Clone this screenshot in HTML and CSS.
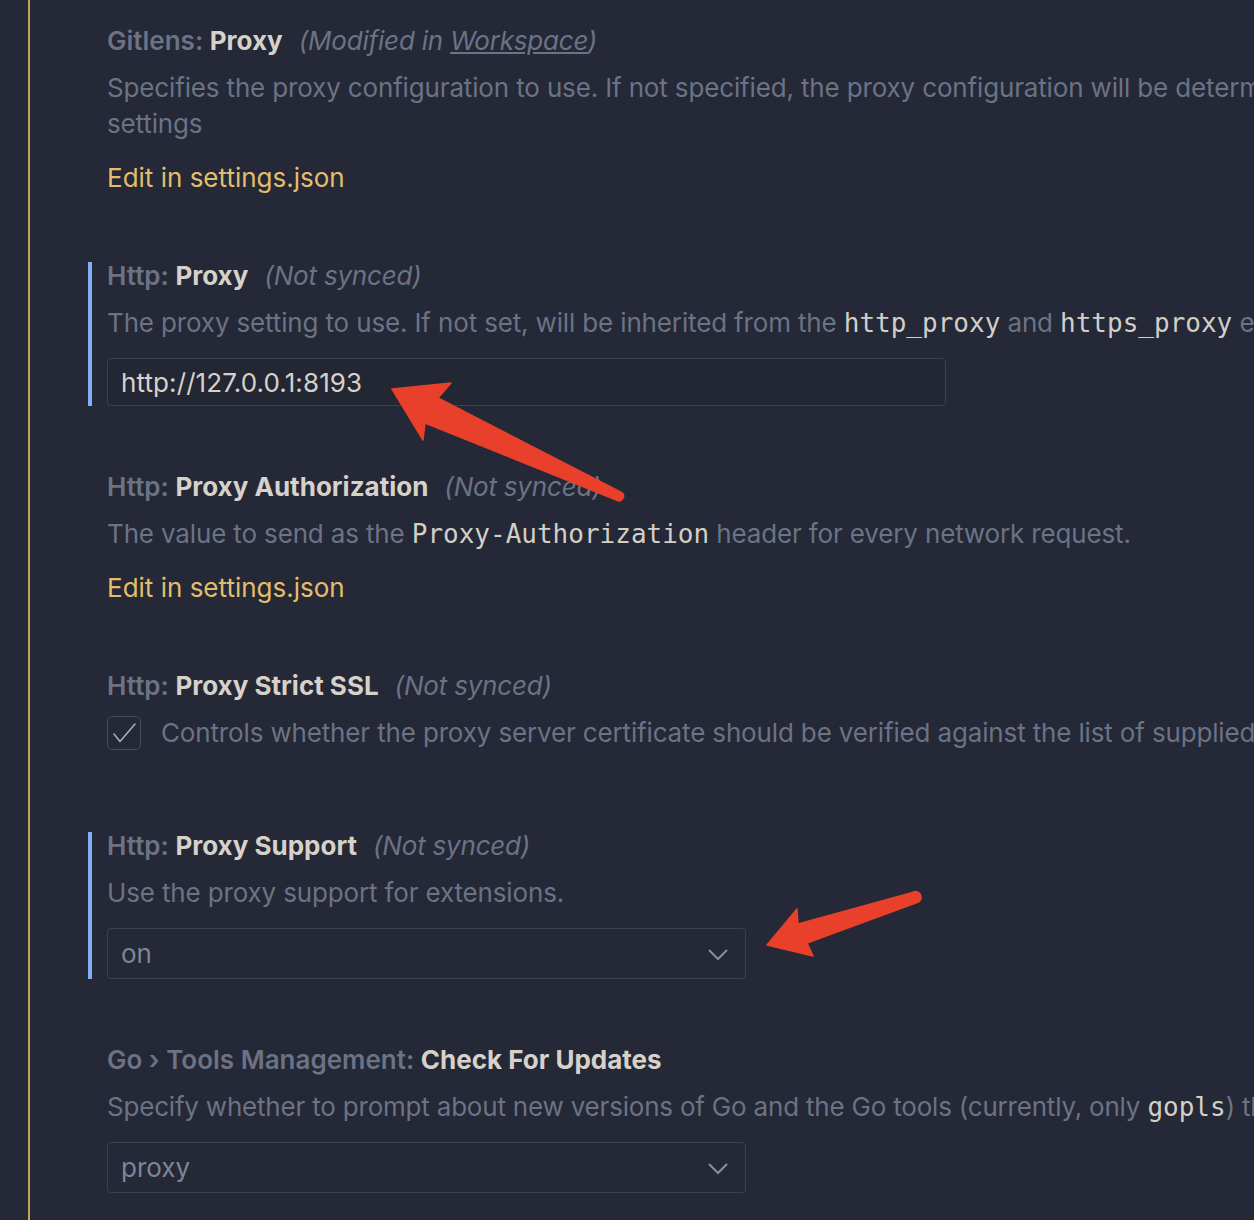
FILE: index.html
```html
<!DOCTYPE html>
<html>
<head>
<meta charset="utf-8">
<link rel="stylesheet" href="styles.css">
</head>
<body>
<div class="editor">
  <div class="list">
    <div class="item">
      <div class="title"><span class="cat">Gitlens: </span><span class="label">Proxy</span><span class="meta">(Modified in <u>Workspace</u>)</span></div>
      <div class="desc nowrap">Specifies the proxy configuration to use. If not specified, the proxy configuration will be determined from VS Code<br>settings</div>
      <div class="link">Edit in settings.json</div>
    </div>

    <div class="item focused has-input">
      <div class="title"><span class="cat">Http: </span><span class="label">Proxy</span><span class="meta">(Not synced)</span></div>
      <div class="desc nowrap">The proxy setting to use. If not set, will be inherited from the <code>http_proxy</code> and <code>https_proxy</code> environment variables.</div>
      <div class="input text-input">http://127.0.0.1:8193</div>
    </div>

    <div class="item">
      <div class="title"><span class="cat">Http: </span><span class="label">Proxy Authorization</span><span class="meta">(Not synced)</span></div>
      <div class="desc nowrap">The value to send as the <code>Proxy-Authorization</code> header for every network request.</div>
      <div class="link">Edit in settings.json</div>
    </div>

    <div class="item bool">
      <div class="title"><span class="cat">Http: </span><span class="label">Proxy Strict SSL</span><span class="meta">(Not synced)</span></div>
      <div class="check-row">
        <span class="checkbox"><svg width="34" height="34" viewBox="0 0 34 34"><polyline points="7,18 13,25.5 28,8" fill="none" stroke="#a9adb6" stroke-width="1.6" stroke-linecap="round" stroke-linejoin="round"/></svg></span>
        <span class="desc nowrap">Controls whether the proxy server certificate should be verified against the list of supplied CAs.</span>
      </div>
    </div>

    <div class="item focused has-input">
      <div class="title"><span class="cat">Http: </span><span class="label">Proxy Support</span><span class="meta">(Not synced)</span></div>
      <div class="desc">Use the proxy support for extensions.</div>
      <div class="input select">
        <span>on</span>
        <svg class="chev" width="22" height="14" viewBox="0 0 22 14"><polyline points="2,3 11,12 20,3" fill="none" stroke="#8a909b" stroke-width="2"/></svg>
      </div>
    </div>

    <div class="item go has-input">
      <div class="title"><span class="cat">Go › Tools Management: </span><span class="label">Check For Updates</span></div>
      <div class="desc nowrap">Specify whether to prompt about new versions of Go and the Go tools (currently, only <code>gopls</code>) the extension depends on.</div>
      <div class="input select">
        <span>proxy</span>
        <svg class="chev" width="22" height="14" viewBox="0 0 22 14"><polyline points="2,3 11,12 20,3" fill="none" stroke="#8a909b" stroke-width="2"/></svg>
      </div>
    </div>
  </div>

  <svg class="arrows" width="1254" height="1220" viewBox="0 0 1254 1220">
    <path d="M392,389 L451,383 L438,398 L621.5,492.5 A4.5,4.5 0 0 1 617.5,500.5 L425,423 L423,440 Z" fill="#e8402a" stroke="#e8402a" stroke-width="1.5" stroke-linejoin="round"/>
    <path d="M767,945 L797,909 L798,924 L912.5,892.5 A5,5 0 0 1 918.5,902 L807,943 L813,956 Z" fill="#e8402a" stroke="#e8402a" stroke-width="1.5" stroke-linejoin="round"/>
  </svg>
</div>
</body>
</html>
```

FILE: styles.css
```css
html, body {
  margin: 0;
  padding: 0;
  background: #252836;
  overflow: hidden;
}

.editor {
  position: relative;
  width: 1254px;
  height: 1220px;
  overflow: hidden;
  font-family: Inter, "Noto Sans", sans-serif;
  font-size: 26px;
  color: #6b7385;
}

.list {
  margin-left: 28px;
  border-left: 2px solid #c4a25a;
  padding: 27px 0 0 58px;
  height: 100%;
  box-sizing: border-box;
}

.item {
  border-left: 4px solid transparent;
  padding-left: 15px;
  margin-bottom: 66px;
}

.item.has-input {
  margin-bottom: 67px;
}

.item.focused {
  border-left-color: #80b0f0;
}

.item.bool {
  margin-bottom: 81px;
}

.title {
  line-height: 28px;
  height: 28px;
  white-space: nowrap;
}

.cat {
  font-weight: 600;
  color: #6b7385;
}

.label {
  font-weight: 700;
  color: #d6d2ca;
}

.meta {
  font-style: italic;
  margin-left: 16px;
  color: #6b7385;
  letter-spacing: -0.2px;
}

.desc {
  margin-top: 15px;
  line-height: 36px;
  color: #6b7385;
  letter-spacing: -0.15px;
}

.go .desc {
  letter-spacing: -0.2px;
}

.nowrap {
  white-space: nowrap;
}

code {
  font-family: "DejaVu Sans Mono", monospace;
  font-size: 26px;
  letter-spacing: 0;
  color: #d2cfc8;
}

.link {
  margin-top: 18px;
  line-height: 36px;
  color: #e2be6c;
}

.input {
  margin-top: 17px;
  box-sizing: border-box;
  border: 1px solid #3c4050;
  border-radius: 4px;
  display: flex;
  align-items: center;
  padding-left: 13px;
}

.text-input {
  width: 839px;
  height: 48px;
  color: #d6d2ca;
  background: #232633;
  letter-spacing: 0.1px;
}

.select {
  width: 639px;
  height: 51px;
  color: #7e8595;
  justify-content: space-between;
  padding-right: 16px;
  background: #252836;
}

.chev {
  display: block;
}

.check-row {
  margin-top: 15px;
  display: flex;
  align-items: center;
  height: 36px;
  gap: 20px;
}

.check-row .desc {
  margin-top: 0;
}

.checkbox {
  width: 34px;
  height: 34px;
  box-sizing: border-box;
  border: 1.5px solid #474c5a;
  border-radius: 5px;
  position: relative;
  flex: none;
}

.checkbox svg {
  position: absolute;
  left: -1.5px;
  top: -1.5px;
}

.arrows {
  position: absolute;
  left: 0;
  top: 0;
  pointer-events: none;
}
```
